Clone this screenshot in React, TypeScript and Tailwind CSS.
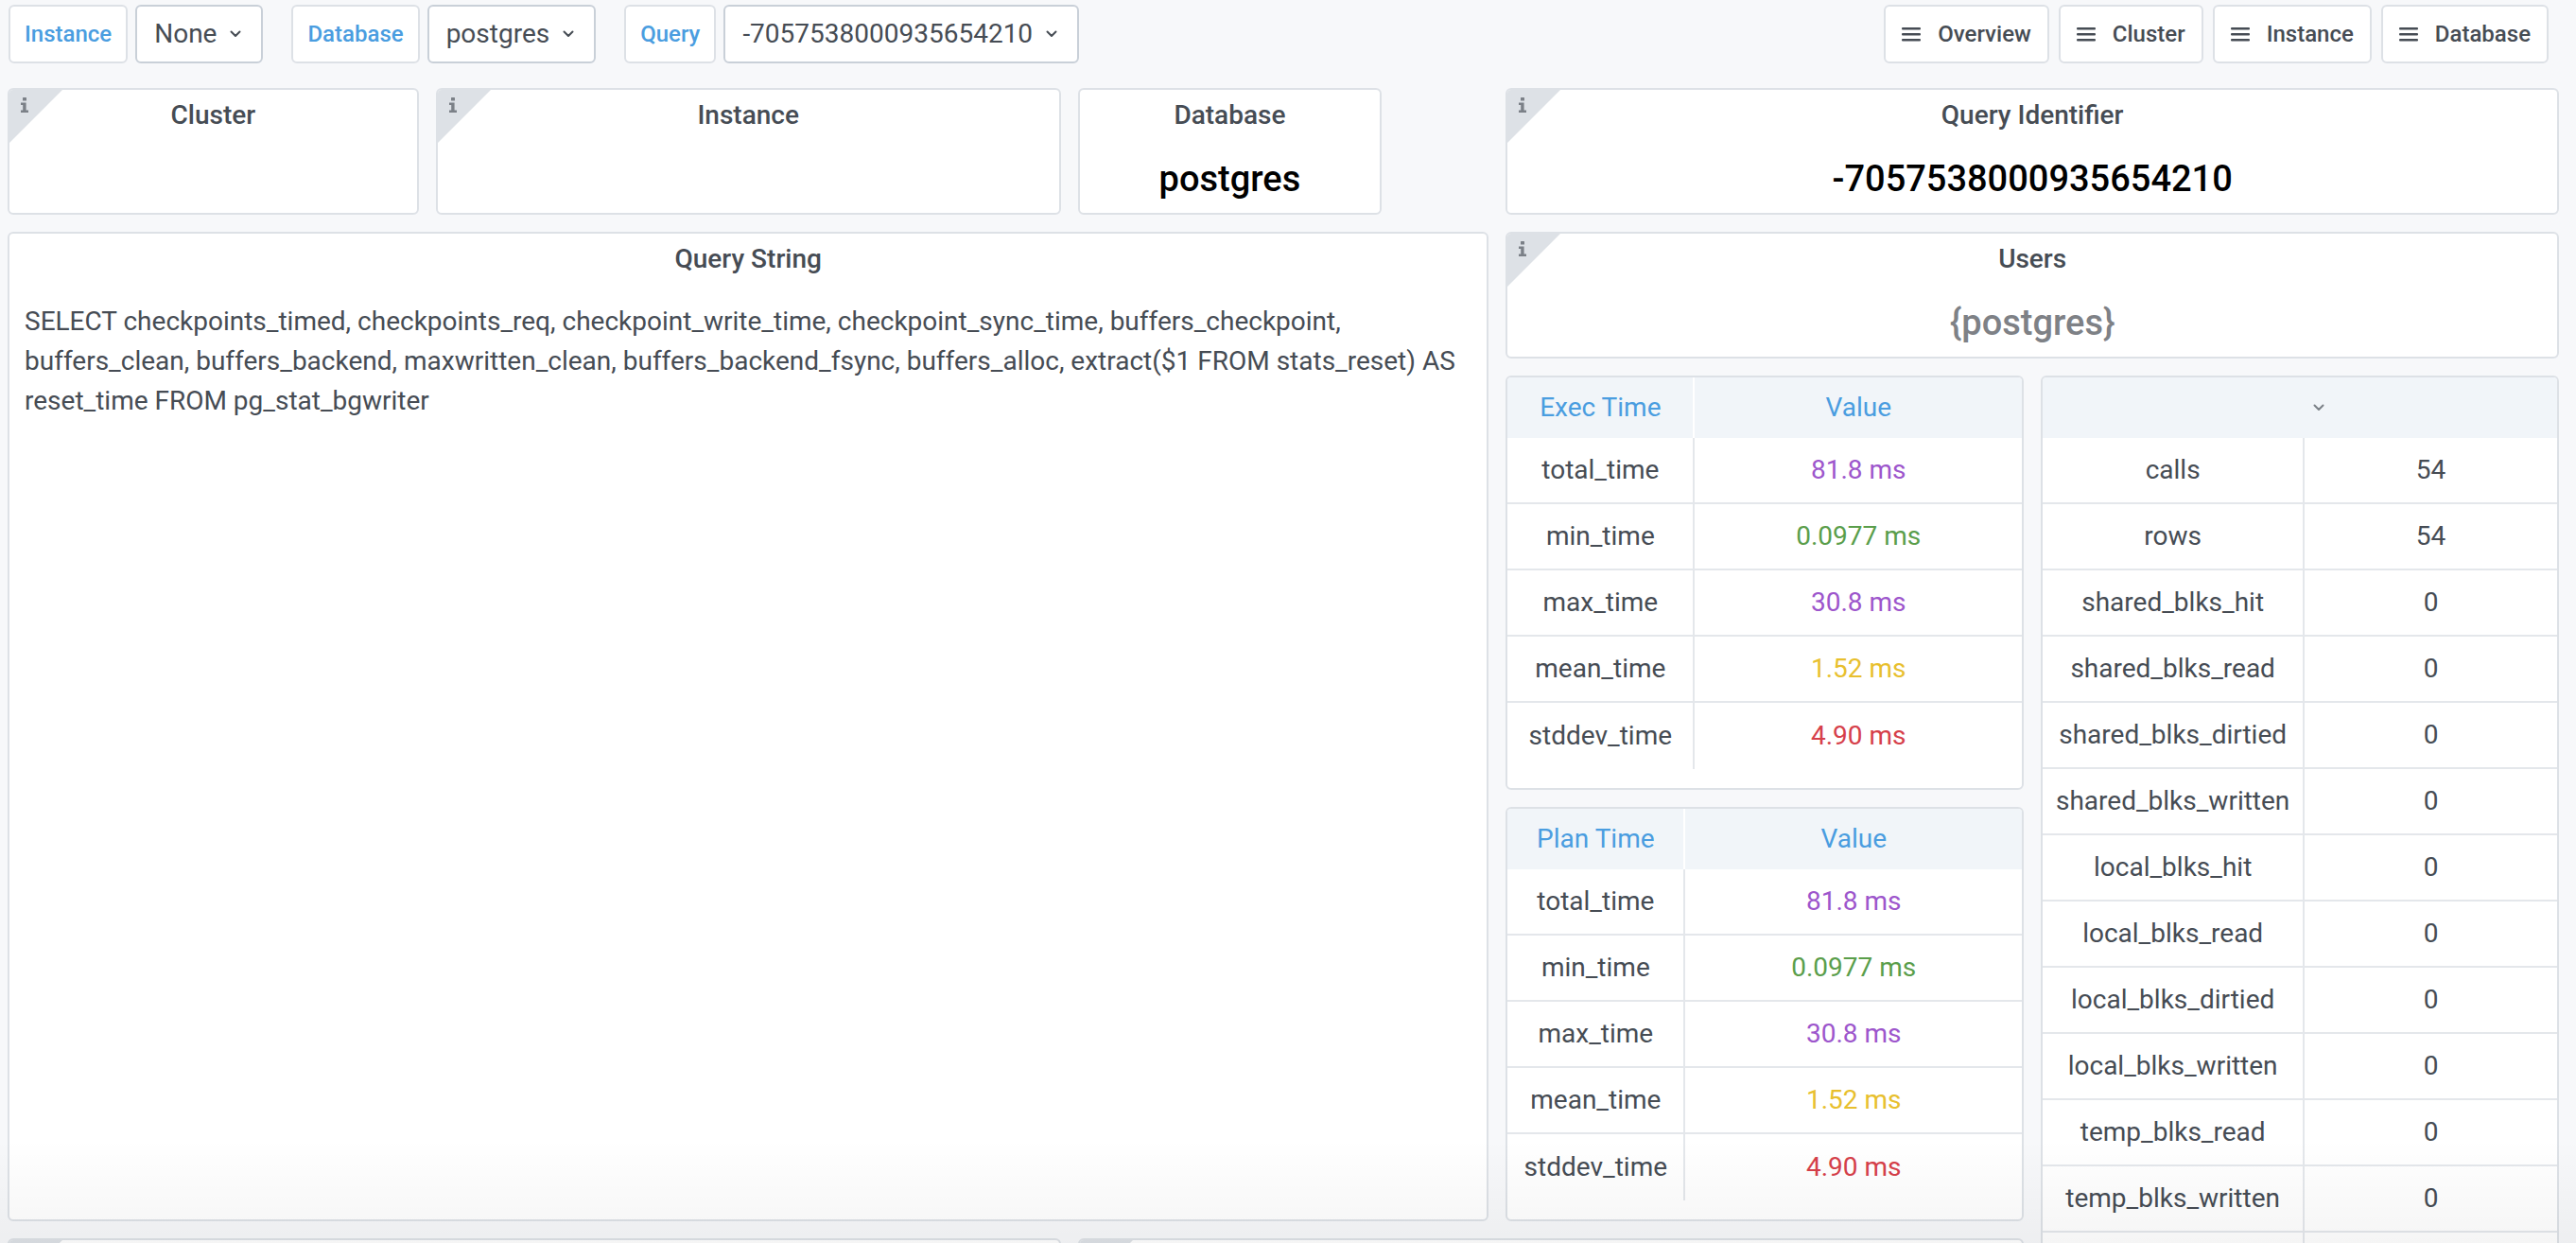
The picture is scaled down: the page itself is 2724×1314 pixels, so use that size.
import React from "react";

type Row = { name: string; value: string; color?: string };

const BORDER = "border-[#dde1e6]";

const Chevron = ({ className = "" }: { className?: string }) => (
  <svg width="12" height="8" viewBox="0 0 12 8" className={className}>
    <path d="M1.5 1.5L6 6L10.5 1.5" fill="none" stroke="currentColor" strokeWidth="2" strokeLinecap="round" strokeLinejoin="round" />
  </svg>
);

const Burger = () => (
  <svg width="20" height="16" viewBox="0 0 20 16" fill="currentColor">
    <rect x="0" y="1" width="20" height="2.4" rx="1" />
    <rect x="0" y="7" width="20" height="2.4" rx="1" />
    <rect x="0" y="13" width="20" height="2.4" rx="1" />
  </svg>
);

const InfoCorner = () => (
  <div className="absolute left-0 top-0">
    <svg width="56" height="56" viewBox="0 0 56 56">
      <path d="M0 0H56L0 56Z" fill="#dde1e6" />
    </svg>
    <svg className="absolute left-[12px] top-[8px]" width="8" height="16" viewBox="0 0 8 16" fill="#7b8087">
      <rect x="2" y="0" width="4" height="3.5" rx="0.6" />
      <path d="M0 5.5H5.6V13.4H8V16H0V13.4H2.2V8H0Z" />
    </svg>
  </div>
);

function Panel({ className, info, children }: { className: string; info?: boolean; children?: React.ReactNode }) {
  return (
    <div className={`relative overflow-hidden rounded-[6px] border-2 ${BORDER} bg-white ${className}`}>
      {info && <InfoCorner />}
      {children}
    </div>
  );
}

const Title = ({ children }: { children: React.ReactNode }) => (
  <div className="pt-[10px] text-center text-[28px] font-medium leading-[34px] text-[#464c54]">{children}</div>
);

function StatPanel({ className, title, value, valueColor = "text-black", info }: {
  className: string; title: string; value?: string; valueColor?: string; info?: boolean;
}) {
  return (
    <Panel className={className} info={info}>
      <Title>{title}</Title>
      {value && (
        <div className={`mt-[31px] text-center text-[38px] font-medium leading-none ${valueColor}`}>{value}</div>
      )}
    </Panel>
  );
}

function VarPicker({ label, value }: { label: string; value: string }) {
  return (
    <div className="flex items-center gap-[8px]">
      <div className={`flex h-[62px] items-center rounded-[6px] border-2 ${BORDER} bg-white px-[15px] text-[24px] font-medium text-[#4a9de0]`}>
        {label}
      </div>
      <div className="flex h-[62px] items-center gap-[14px] rounded-[6px] border-2 border-[#c9d0d8] bg-white pl-[18px] pr-[21px] text-[28px] text-[#464c54]">
        <span>{value}</span>
        <Chevron />
      </div>
    </div>
  );
}

const timeRows: Row[] = [
  { name: "total_time", value: "81.8 ms", color: "text-[#9d56cc]" },
  { name: "min_time", value: "0.0977 ms", color: "text-[#5a9e4b]" },
  { name: "max_time", value: "30.8 ms", color: "text-[#9d56cc]" },
  { name: "mean_time", value: "1.52 ms", color: "text-[#e8bf2e]" },
  { name: "stddev_time", value: "4.90 ms", color: "text-[#d6404a]" },
];

const counterRows: Row[] = [
  { name: "calls", value: "54" },
  { name: "rows", value: "54" },
  { name: "shared_blks_hit", value: "0" },
  { name: "shared_blks_read", value: "0" },
  { name: "shared_blks_dirtied", value: "0" },
  { name: "shared_blks_written", value: "0" },
  { name: "local_blks_hit", value: "0" },
  { name: "local_blks_read", value: "0" },
  { name: "local_blks_dirtied", value: "0" },
  { name: "local_blks_written", value: "0" },
  { name: "temp_blks_read", value: "0" },
  { name: "temp_blks_written", value: "0" },
  { name: "blk_read_time", value: "0" },
  { name: "blk_write_time", value: "0" },
];

function TablePanel({ className, label, firstCol, rows, header = true }: {
  className: string; label?: string; firstCol: string; rows: Row[]; header?: boolean;
}) {
  return (
    <Panel className={className}>
      <div className="flex h-[64px] bg-[#f1f5f9] text-[28px] text-[#4a9de0]">
        {header ? (
          <>
            <div className={`flex ${firstCol} items-center justify-center border-r-2 border-white`}>{label}</div>
            <div className="flex flex-1 items-center justify-center">Value</div>
          </>
        ) : (
          <div className="flex flex-1 items-center pl-[286px] text-[#7b8087]">
            <Chevron />
          </div>
        )}
      </div>
      <div className="divide-y-2 divide-[#e4e7eb] text-[28px] text-[#464c54]">
        {rows.map((r) => (
          <div key={r.name} className="flex h-[70px]">
            <div className={`flex ${firstCol} items-center justify-center border-r-2 border-[#e4e7eb]`}>{r.name}</div>
            <div className={`flex flex-1 items-center justify-center ${r.color ?? ""}`}>{r.value}</div>
          </div>
        ))}
      </div>
    </Panel>
  );
}

export default function App() {
  return (
    <div className="relative h-[1314px] overflow-hidden bg-[#f7f8fa] font-[Roboto,sans-serif]">
      <div className="flex items-center justify-between pl-[9px] pr-[29px] pt-[5px]">
        <div className="flex items-center gap-[30px]">
          <VarPicker label="Instance" value="None" />
          <VarPicker label="Database" value="postgres" />
          <VarPicker label="Query" value="-7057538000935654210" />
        </div>
        <div className="flex gap-[10px]">
          {["Overview", "Cluster", "Instance", "Database"].map((b) => (
            <div
              key={b}
              className={`flex h-[62px] items-center gap-[18px] rounded-[6px] border-2 ${BORDER} bg-white px-[17px] text-[24px] font-medium text-[#464c54]`}
            >
              <Burger />
              <span>{b}</span>
            </div>
          ))}
        </div>
      </div>

      <div className="ml-[8px] mt-[26px] grid w-[2698px] grid-cols-24 auto-rows-[32.67px] gap-[18px]">
        <StatPanel className="col-span-4 col-start-1 row-span-3 row-start-1" title="Cluster" info />
        <StatPanel className="col-span-6 col-start-5 row-span-3 row-start-1" title="Instance" info />
        <StatPanel className="col-span-3 col-start-11 row-span-3 row-start-1" title="Database" value="postgres" />
        <StatPanel className="col-span-10 col-start-15 row-span-3 row-start-1" title="Query Identifier" value="-7057538000935654210" info />

        <Panel className="col-span-14 col-start-1 row-span-21 row-start-4">
          <Title>Query String</Title>
          <p className="mt-[28px] px-[16px] text-[28px] leading-[42px] text-[#464c54]">
            SELECT checkpoints_timed, checkpoints_req, checkpoint_write_time, checkpoint_sync_time, buffers_checkpoint,
            buffers_clean, buffers_backend, maxwritten_clean, buffers_backend_fsync, buffers_alloc, extract($1 FROM
            stats_reset) AS reset_time FROM pg_stat_bgwriter
          </p>
        </Panel>

        <StatPanel className="col-span-10 col-start-15 row-span-3 row-start-4" title="Users" value="{postgres}" valueColor="text-[#7e8186]" info />

        <TablePanel className="col-span-5 col-start-15 row-span-9 row-start-7" label="Exec Time" firstCol="w-[198px]" rows={timeRows} />
        <TablePanel className="col-span-5 col-start-15 row-span-9 row-start-16" label="Plan Time" firstCol="w-[188px]" rows={timeRows} />
        <TablePanel className="col-span-5 col-start-20 row-span-22 row-start-7" firstCol="w-[277px]" rows={counterRows} header={false} />

        <Panel className="col-span-10 col-start-1 row-span-6 row-start-25" info />
        <Panel className="col-span-9 col-start-11 row-span-6 row-start-25" info />
      </div>

      {/* soft fade at the bottom edge, as in the capture */}
      <div className="pointer-events-none absolute inset-x-0 bottom-0 h-[110px] bg-gradient-to-b from-transparent to-[rgba(0,0,0,0.04)]" />
    </div>
  );
}
